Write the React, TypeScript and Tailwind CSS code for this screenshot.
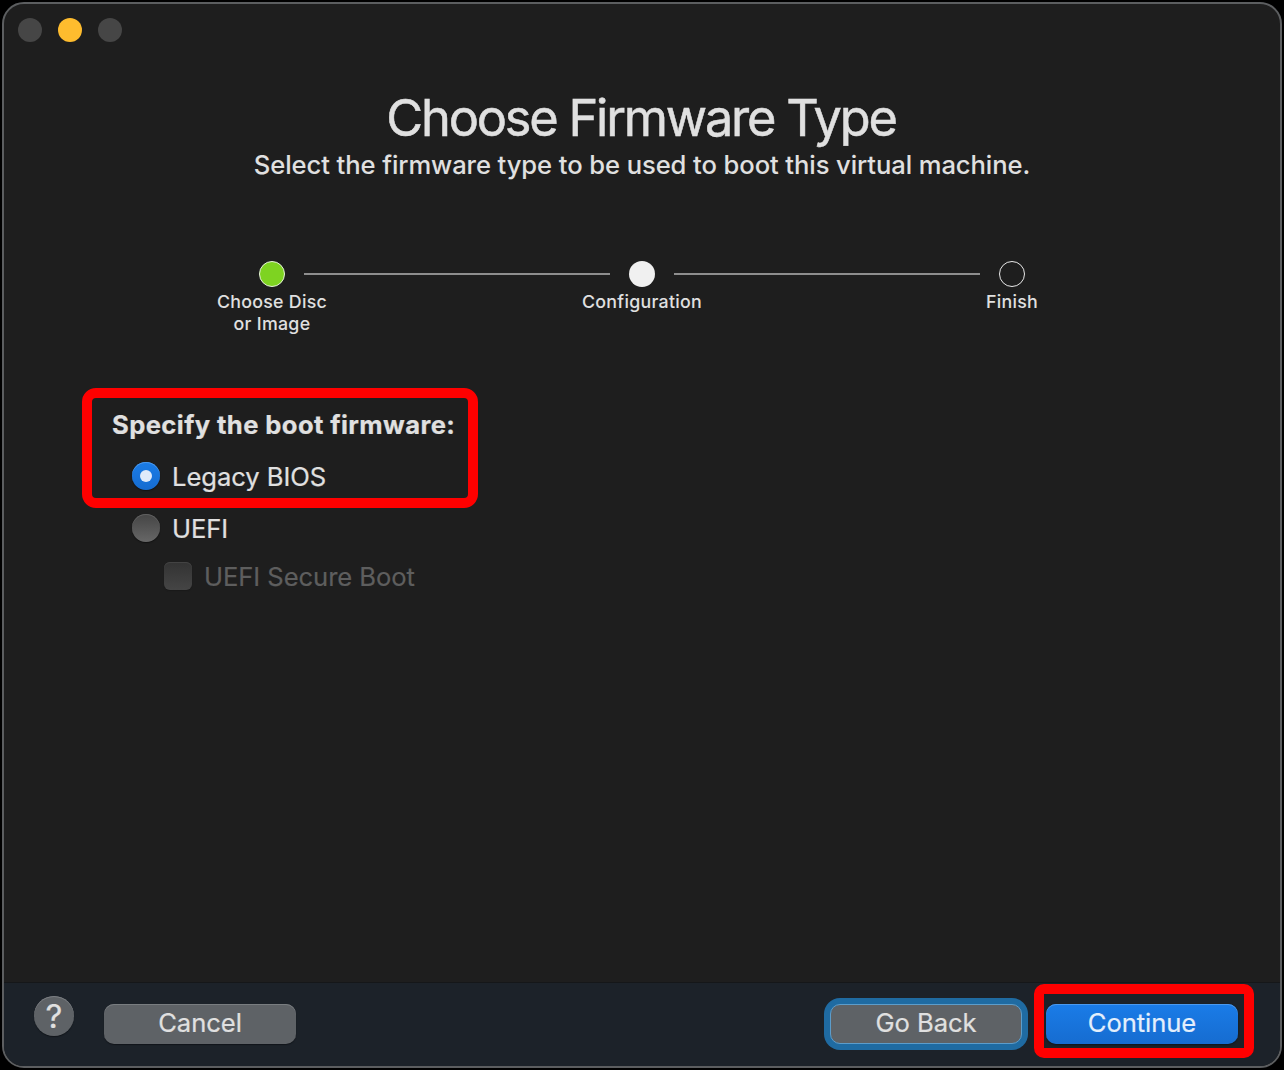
import type { ReactNode } from "react";

function Step({ label, dot }: { label: ReactNode; dot: string }) {
  return (
    <div className="flex w-16 flex-col items-center">
      <div className={`size-[26px] rounded-full ${dot}`} />
      <div className="mt-1 whitespace-nowrap text-center text-[17.8px] font-medium leading-[22px] tracking-[0.28px]">
        {label}
      </div>
    </div>
  );
}

function Connector() {
  return <div className="mt-3 h-0.5 w-[306px] bg-[#8e8e8e]" />;
}

export default function App() {
  return (
    <div className="h-[1070px] w-[1284px] overflow-hidden bg-black p-0.5 font-['Inter',sans-serif] text-[#e0e0e0]">
      <div className="flex h-[1066px] w-[1280px] flex-col overflow-hidden rounded-[22px] border-2 border-[#5c5e60] bg-[#1e1e1e]">
        <div className="flex h-[52px] items-center gap-4 pl-3.5">
          <div className="size-6 rounded-full bg-[#464646]" />
          <div className="size-6 rounded-full bg-[#febc2e]" />
          <div className="size-6 rounded-full bg-[#464646]" />
        </div>

        <header className="mt-8 flex flex-col items-center whitespace-nowrap">
          <h1 className="-ml-0.5 text-[50.5px] leading-[60px] tracking-[-2.2px] [-webkit-text-stroke:0.5px_#e0e0e0]">Choose Firmware Type</h1>
          <p className="mt-0.5 text-[25.6px] font-medium leading-[30px] tracking-[-0.09px]">
            Select the firmware type to be used to boot this virtual machine.
          </p>
        </header>

        <section className="mt-[81px] flex justify-center">
          <Step
            dot="border border-[#e8f4dc] bg-[#7ed321]"
            label={
              <>
                Choose Disc
                <br />
                or Image
              </>
            }
          />
          <Connector />
          <Step dot="bg-[#f0f0f0]" label="Configuration" />
          <Connector />
          <Step dot="border border-[#e8e8e8]" label="Finish" />
        </section>

        <section className="ml-[78px] mt-[53px] flex flex-col whitespace-nowrap text-[25.6px] leading-[32px] tracking-[-0.06px] [-webkit-text-stroke:0.2px_currentColor]">
          <div className="h-[120px] w-[396px] rounded-[14px] border-[10px] border-[#ff0000] pl-5 pt-[11px]">
            <div className="font-bold tracking-[0.4px]">Specify the boot firmware:</div>
            <label className="ml-5 mt-5 flex items-start gap-3">
              <span className="mt-px flex size-7 items-center justify-center rounded-full bg-linear-to-b from-[#1a7ce8] to-[#166cd0] shadow-[inset_0_1px_0_#4b99ee,0_1px_1px_#111111]">
                <span className="size-3 rounded-full bg-[#dfeafa]" />
              </span>
              <span>Legacy BIOS</span>
            </label>
          </div>
          <label className="ml-[50px] mt-[5px] flex items-start gap-3">
            <span className="mt-px size-7 rounded-full bg-linear-to-b from-[#454545] to-[#676767] shadow-[inset_0_1px_0_#606060,0_1px_1px_#111111]" />
            <span>UEFI</span>
          </label>
          <label className="ml-[82px] mt-4 flex items-start gap-3 text-[#5e5e5e]">
            <span className="mt-px size-7 rounded-md bg-linear-to-b from-[#333333] to-[#454545] shadow-[inset_0_1px_0_#434343,0_1px_1px_#191919]" />
            <span>UEFI Secure Boot</span>
          </label>
        </section>

        <footer className="mt-auto flex h-[84px] items-start border-t border-[#151719] bg-[#1c2229] text-[25.6px] leading-9 tracking-[-0.05px] [-webkit-text-stroke:0.2px_currentColor]">
          <button className="ml-[30px] mt-[13px] flex size-10 items-center justify-center rounded-full bg-[#5e6266] text-[33px] shadow-[inset_0_1px_0_#7b7e82,0_1px_1px_#11151a]">
            ?
          </button>
          <button className="ml-[30px] mt-[21px] h-10 w-48 rounded-[10px] bg-[#5e6266] pb-0.5 shadow-[inset_0_1px_0_#797d80,0_1px_1px_#11151a]">
            Cancel
          </button>
          <div className="ml-[528px] mt-[15px] h-[52px] w-[204px] rounded-[16px] bg-[#1f6ba2] p-[6px]">
            <button className="h-10 w-48 rounded-[10px] border border-[#5c9dcb] bg-[#5e6266] pb-0.5">Go Back</button>
          </div>
          <div className="ml-[6px] mt-px h-[74px] w-[220px] rounded-[10px] border-[10px] border-[#ff0000] pl-0.5 pt-[10px]">
            <button className="h-10 w-48 rounded-[10px] bg-linear-to-b from-[#1a7ce8] to-[#166cd0] pb-0.5 text-[#e4effc] shadow-[inset_0_1px_0_#4b99ee,0_1px_2px_#101419]">
              Continue
            </button>
          </div>
        </footer>
      </div>
    </div>
  );
}
